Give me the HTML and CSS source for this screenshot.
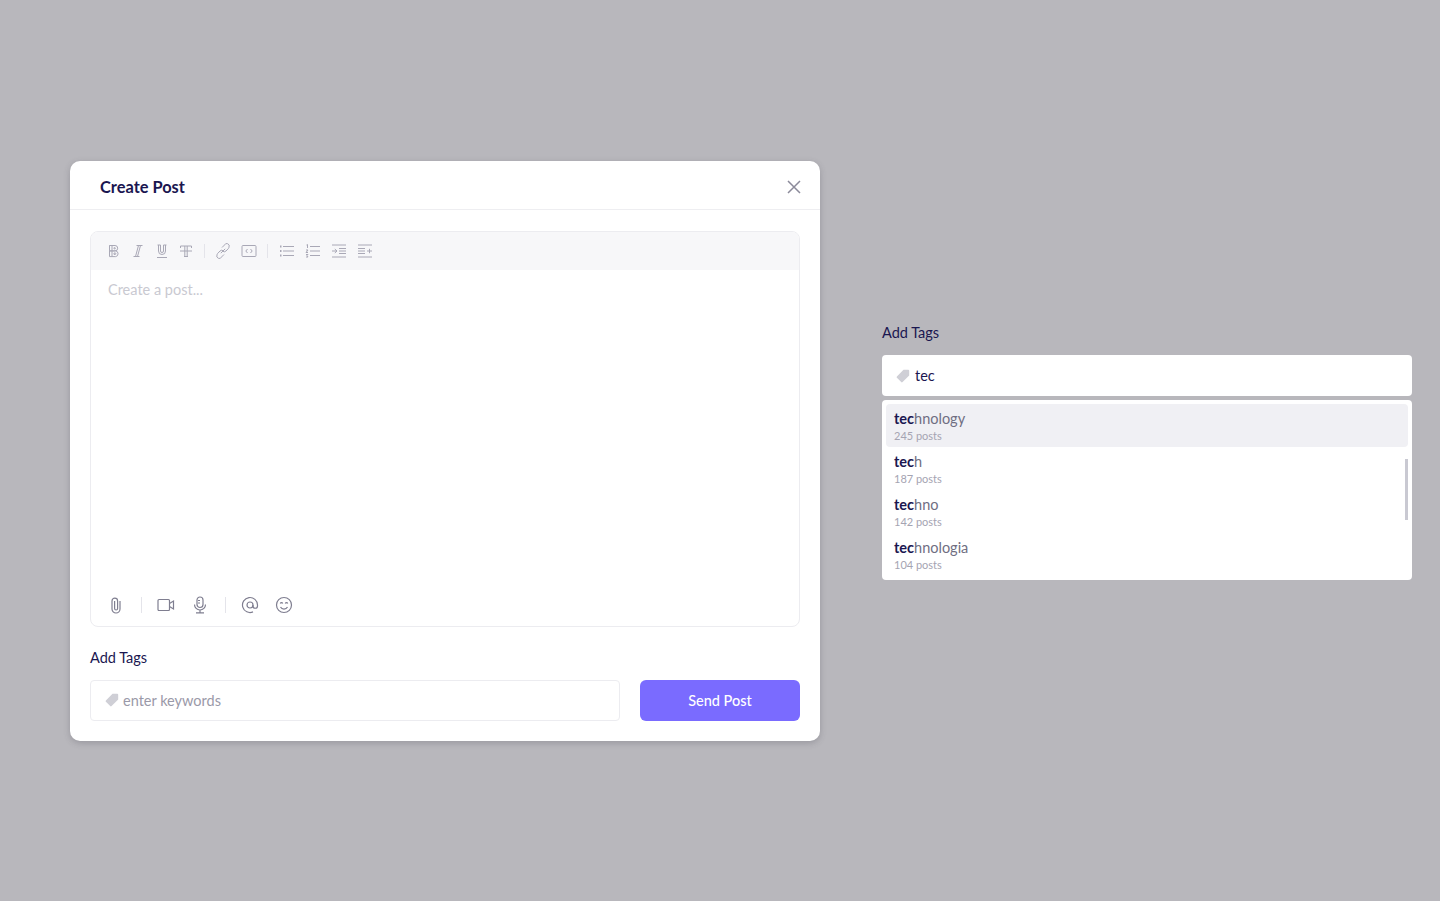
FILE: index.html
```html
<!DOCTYPE html>
<html lang="en">
<head>
    <meta charset="UTF-8">
    <meta name="viewport" content="width=device-width, initial-scale=1.0">
    <title>Create Post</title>
    <link rel="stylesheet" href="styles.css">
</head>
<body>

    <div class="page">
        <!-- Create post modal -->
        <div class="modal">
            <div class="modal-header">
                <h1>Create Post</h1>
                <svg class="close" width="16" height="16" viewBox="0 0 16 16"><path d="M2 2l12 12M14 2L2 14"/></svg>
            </div>

            <div class="modal-body">
                <div class="editor">
                    <div class="toolbar">
                        <div class="tool-group">
                            <svg class="icon" width="16" height="16" viewBox="0 0 16 16"><path d="M3.500 2.500h5.500a2.700 2.700 0 0 1 0 5.400H3.500zM3.500 7.900h6.200a2.900 2.900 0 0 1 0 5.700H3.500zM6 2.500v11M3.500 2.500h1M8 4.700h.8a.6.6 0 0 1 0 1.200H8zM8 10h1.200a.7.7 0 0 1 0 1.400H8z"/></svg>
                            <svg class="icon" width="16" height="16" viewBox="0 0 16 16"><path d="M6.500 2.500h6M3.500 13.500h6M8.500 2.500l-3 11M10.500 2.500l-3 11"/></svg>
                            <svg class="icon" width="16" height="16" viewBox="0 0 16 16"><path d="M3.500 2h3M9.500 2h3M4.500 2v6a3.500 3.500 0 0 0 7 0V2M6.500 2v6a1.500 1.500 0 0 0 3 0V2M3 14.500h10"/></svg>
                            <svg class="icon" width="16" height="16" viewBox="0 0 16 16"><path d="M2.500 3h11M2.500 5V3M13.500 5V3M2 8h12M6.800 3v10.500M9.200 3v10.500M6 13.500h4"/></svg>
                        </div>
                        <span class="sep"></span>
                        <div class="tool-group wide">
                            <svg class="icon" width="16" height="16" viewBox="0 0 16 16"><path d="M7 4.500l2.500-2.500a2.400 2.400 0 0 1 4.500 2 2.400 2.400 0 0 1-.6 1.500L11 8a2.400 2.400 0 0 1-3.400 0M9 11.500L6.500 14a2.400 2.400 0 0 1-4.500-2 2.400 2.400 0 0 1 .6-1.500L5 8a2.400 2.400 0 0 1 3.400 0M5.800 10.200l4.400-4.400"/></svg>
                            <svg class="icon" width="16" height="14" viewBox="0 0 16 14"><rect x="1" y="1.500" width="14" height="11" rx="1"/><path d="M6.500 5L4.800 7l1.700 2M9.500 5l1.700 2-1.700 2"/></svg>
                        </div>
                        <span class="sep"></span>
                        <div class="tool-group lists">
                            <svg class="icon" width="16" height="16" viewBox="0 0 16 16"><path d="M4 3.500h11M4 8h11M4 12.500h11"/><path class="dot" d="M1 3.500h1.500M1 8h1.500M1 12.500h1.500"/></svg>
                            <svg class="icon" width="16" height="16" viewBox="0 0 16 16"><path d="M5 3.500h10M5 8h10M5 12.500h10M1.500 2l1-.5V5M1 7h2L1 9.500h2M1 11.500h2l-1 1 1 1.500H1"/></svg>
                            <svg class="icon" width="16" height="16" viewBox="0 0 16 16"><path d="M1 2h14M8 5.500h7M8 8h7M8 10.500h7M1 14h14M1 8h4.500M3.800 6L6 8l-2.200 2"/></svg>
                            <svg class="icon" width="16" height="16" viewBox="0 0 16 16"><path d="M1 2h14M1 5.500h7M1 8h7M1 10.500h7M1 14h14M10 8h5M12.500 5.800v4.400"/></svg>
                        </div>
                    </div>

                    <div class="editor-text">Create a post...</div>

                    <div class="attachments">
                        <svg class="tool" width="18" height="18" viewBox="0 0 18 18"><path d="M13 5v8a4 4 0 0 1-8 0V5a2.800 2.800 0 0 1 5.600 0v7.500a1.500 1.500 0 0 1-3 0V5"/></svg>
                        <span class="sep"></span>
                        <svg class="tool" width="18" height="18" viewBox="0 0 18 18"><rect x="1" y="3.500" width="11.500" height="11" rx="1"/><path d="M12.500 7.500l4-2.500v8l-4-2.500"/></svg>
                        <svg class="tool nudge" width="18" height="18" viewBox="0 0 18 18"><rect x="6" y="1" width="6" height="10.500" rx="3"/><path d="M3.500 8.500a5.500 5.500 0 0 0 11 0M9 14v2.500M5 16.800h8M7 4.500h2M7 7h2"/></svg>
                        <span class="sep"></span>
                        <svg class="tool" width="18" height="18" viewBox="0 0 18 18"><circle cx="9" cy="9" r="3"/><path d="M12 9v1a2 2 0 0 0 4.500 0V9A7.500 7.500 0 1 0 12 15.900"/></svg>
                        <svg class="tool nudge" width="18" height="18" viewBox="0 0 18 18"><circle cx="9" cy="9" r="7.500"/><path d="M5.500 11a4 4 0 0 0 7 0M5.300 7.500a1.300 1.300 0 0 1 2.400 0M10.300 7.500a1.300 1.300 0 0 1 2.400 0"/></svg>
                    </div>
                </div>

                <label class="field-label">Add Tags</label>
                <div class="tags-row">
                    <div class="tag-input muted">
                        <svg class="tag-icon" width="14" height="14" viewBox="0 0 14 14"><path d="M7.500.8h4.700a1 1 0 0 1 1 1v4.700L6.600 13.100a1 1 0 0 1-1.400 0L.9 8.800a1 1 0 0 1 0-1.400z"/></svg>
                        enter keywords
                    </div>
                    <button class="send">Send Post</button>
                </div>
            </div>
        </div>

        <!-- Tag search, open state -->
        <div class="tag-panel">
            <label class="field-label">Add Tags</label>
            <div class="tag-input active">
                <svg class="tag-icon" width="14" height="14" viewBox="0 0 14 14"><path d="M7.500.8h4.700a1 1 0 0 1 1 1v4.700L6.600 13.100a1 1 0 0 1-1.400 0L.9 8.800a1 1 0 0 1 0-1.400z"/></svg>
                tec
            </div>
            <div class="dropdown">
                <div class="option selected">
                    <div class="option-name"><b>tec</b>hnology</div>
                    <div class="option-count">245 posts</div>
                </div>
                <div class="option">
                    <div class="option-name"><b>tec</b>h</div>
                    <div class="option-count">187 posts</div>
                </div>
                <div class="option">
                    <div class="option-name"><b>tec</b>hno</div>
                    <div class="option-count">142 posts</div>
                </div>
                <div class="option">
                    <div class="option-name"><b>tec</b>hnologia</div>
                    <div class="option-count">104 posts</div>
                </div>
                <span class="scrollbar"></span>
            </div>
        </div>
    </div>

</body>
</html>
```

FILE: styles.css
```css
* {
    box-sizing: border-box;
}
body {
    margin: 0;
    background-color: #b8b7bc;
    font-family: "Lato", "Noto Sans", sans-serif;
    color: #1a1650;
}
.page {
    min-height: 901px;
    padding-left: 70px;
    display: flex;
    align-items: center;
    gap: 62px;
}

/* Modal */
.modal {
    width: 750px;
    height: 580px;
    background-color: #fff;
    border-radius: 10px;
    box-shadow: 0 2px 6px rgba(60, 60, 70, 0.25);
}
.modal-header {
    height: 49px;
    padding: 4px 18px 0 30px;
    display: flex;
    align-items: center;
    justify-content: space-between;
    border-bottom: 1px solid #eeeef1;
}
h1 {
    margin: 0;
    font-size: 16.4px;
    font-weight: 700;
}
.close {
    fill: none;
    stroke: #8b8a9a;
    stroke-width: 1.5;
}
.modal-body {
    padding: 21px 20px 20px;
}

/* Editor */
.editor {
    height: 396px;
    border: 1px solid #ececf0;
    border-radius: 8px;
    display: flex;
    flex-direction: column;
    overflow: hidden;
}
.toolbar {
    height: 38px;
    padding: 0 15px;
    background-color: #f7f7f9;
    display: flex;
    align-items: center;
    gap: 10px;
}
.tool-group {
    display: flex;
    align-items: center;
    gap: 8px;
}
.tool-group.wide {
    gap: 10px;
}
.tool-group.lists {
    margin-left: 1px;
    gap: 10px;
}
.icon {
    fill: none;
    stroke: #a9a8b6;
    stroke-width: 1;
}
.dot {
    stroke-width: 2;
}
.toolbar .sep {
    height: 14px;
    margin-left: 0;
}
.sep {
    width: 1px;
    height: 16px;
    margin-left: 1px;
    background-color: #e4e4ea;
}
.editor-text {
    flex: 1;
    padding: 11px 17px;
    font-size: 14.5px;
    color: #c9c9d1;
}
.attachments {
    height: 41px;
    padding: 0 16px;
    display: flex;
    align-items: center;
    gap: 15px;
}
.tool {
    fill: none;
    stroke: #7f7e90;
    stroke-width: 1.2;
}
.nudge {
    margin-left: 1px;
}

/* Tags */
.field-label {
    display: block;
    font-size: 14.5px;
    line-height: 20px;
}
.modal .field-label {
    margin: 21px 0 12px;
}
.tags-row {
    display: flex;
    gap: 20px;
}
.tag-input {
    height: 41px;
    padding-left: 14px;
    display: flex;
    align-items: center;
    gap: 4px;
    font-size: 14.5px;
    border-radius: 4px;
}
.tag-input.muted {
    flex: 1;
    border: 1px solid #ececf0;
    color: #9a99a8;
}
.tag-input.active {
    margin-top: 12px;
    gap: 5px;
    background-color: #fff;
}
.tag-icon {
    fill: #cfcfd6;
}
.send {
    width: 160px;
    height: 41px;
    border: none;
    border-radius: 6px;
    background-color: #7a6bff;
    color: #fff;
    font-family: inherit;
    font-size: 14.5px;
    font-weight: 500;
}

/* Right hand panel */
.tag-panel {
    width: 530px;
    padding-top: 2px;
}
.dropdown {
    position: relative;
    margin-top: 4px;
    padding: 4px;
    height: 180px;
    overflow: hidden;
    background-color: #fff;
    border-radius: 4px;
}
.option {
    height: 43px;
    padding: 6px 8px;
    border-radius: 4px;
}
.option.selected {
    background-color: #f0f0f4;
}
.option-name {
    font-size: 14.5px;
    line-height: 18px;
    margin-bottom: 1px;
    color: #6f6e82;
}
.option-name b {
    font-weight: 700;
    color: #1a1650;
}
.option-count {
    font-size: 11px;
    line-height: 14px;
    color: #a5a4b2;
}
.scrollbar {
    position: absolute;
    right: 4px;
    top: 59px;
    width: 3px;
    height: 61px;
    background-color: #c9c9d2;
}
```
